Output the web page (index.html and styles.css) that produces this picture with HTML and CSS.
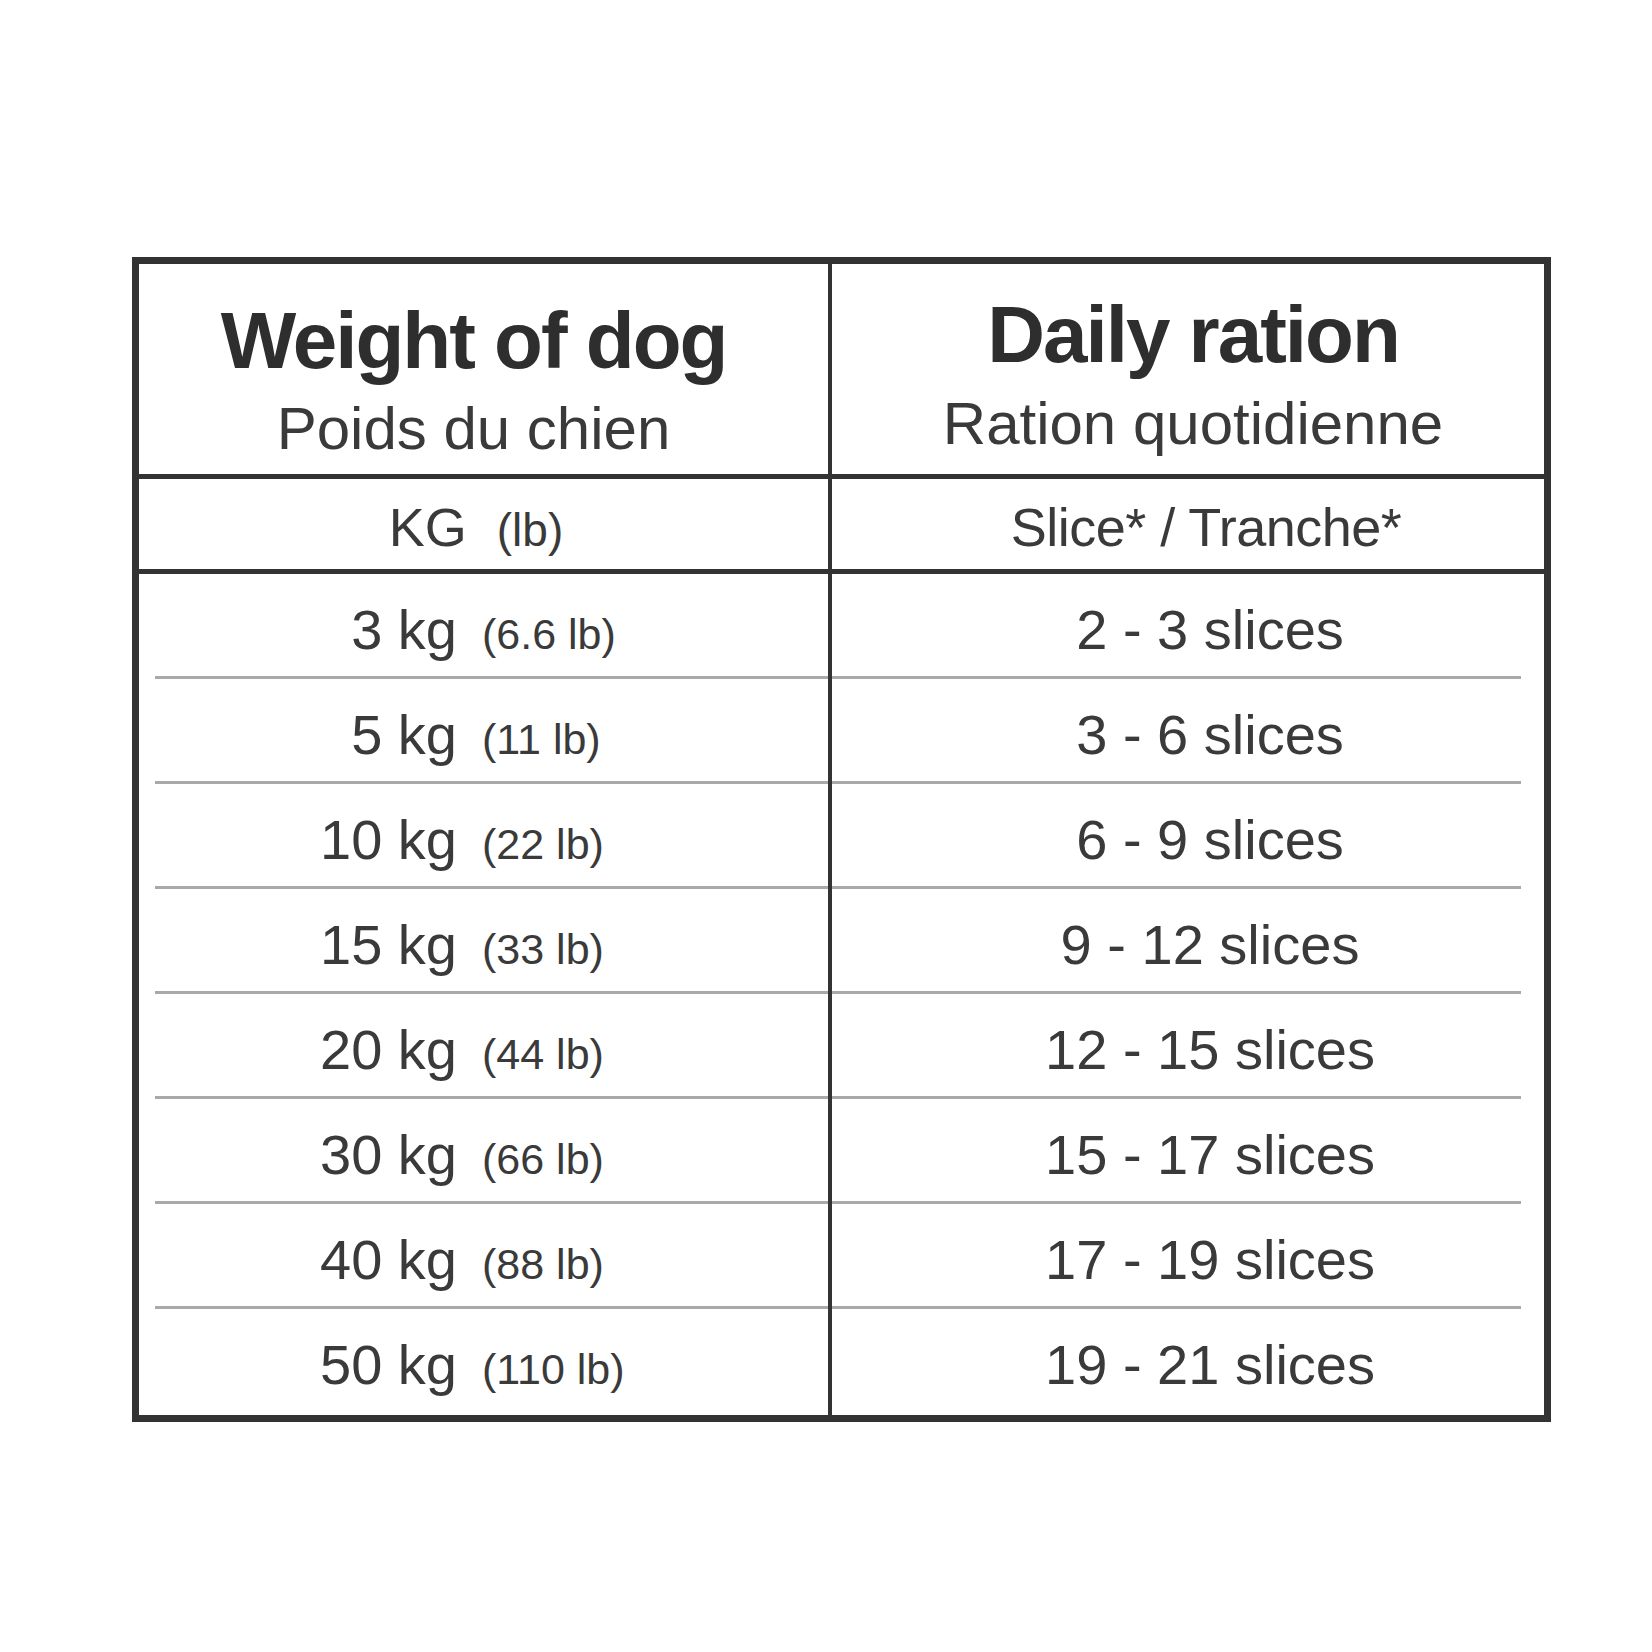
FILE: index.html
```html
<!DOCTYPE html>
<html lang="en">
<head>
<meta charset="utf-8">
<title>Feeding guide</title>
<link rel="stylesheet" href="styles.css">
</head>
<body>
<div class="chart">
  <div class="row head1">
    <div class="cell left">
      <div class="title">Weight of dog</div>
      <div class="sub">Poids du chien</div>
    </div>
    <div class="cell right">
      <div class="title">Daily ration</div>
      <div class="sub">Ration quotidienne</div>
    </div>
  </div>
  <div class="row head2">
    <div class="cell left">KG<span class="unit">(lb)</span></div>
    <div class="cell right">Slice* / Tranche*</div>
  </div>

  <div class="row data"><div class="cell weight"><span class="kg">3 kg</span><span class="lb">(6.6 lb)</span></div><div class="cell ration">2 - 3 slices</div></div>
  <div class="sep"></div>
  <div class="row data"><div class="cell weight"><span class="kg">5 kg</span><span class="lb">(11 lb)</span></div><div class="cell ration">3 - 6 slices</div></div>
  <div class="sep"></div>
  <div class="row data"><div class="cell weight"><span class="kg">10 kg</span><span class="lb">(22 lb)</span></div><div class="cell ration">6 - 9 slices</div></div>
  <div class="sep"></div>
  <div class="row data"><div class="cell weight"><span class="kg">15 kg</span><span class="lb">(33 lb)</span></div><div class="cell ration">9 - 12 slices</div></div>
  <div class="sep"></div>
  <div class="row data"><div class="cell weight"><span class="kg">20 kg</span><span class="lb">(44 lb)</span></div><div class="cell ration">12 - 15 slices</div></div>
  <div class="sep"></div>
  <div class="row data"><div class="cell weight"><span class="kg">30 kg</span><span class="lb">(66 lb)</span></div><div class="cell ration">15 - 17 slices</div></div>
  <div class="sep"></div>
  <div class="row data"><div class="cell weight"><span class="kg">40 kg</span><span class="lb">(88 lb)</span></div><div class="cell ration">17 - 19 slices</div></div>
  <div class="sep"></div>
  <div class="row data last"><div class="cell weight"><span class="kg">50 kg</span><span class="lb">(110 lb)</span></div><div class="cell ration">19 - 21 slices</div></div>
</div>
</body>
</html>
```

FILE: styles.css
```css
html, body {
  margin: 0;
  padding: 0;
  background: #ffffff;
}

body {
  font-family: "Liberation Sans", Arial, Helvetica, sans-serif;
  color: #333333;
}

.chart {
  position: relative;
  width: 1405px;
  margin: 257px 0 0 132px;
  border: 7px solid #333333;
}

/* central vertical rule, drawn over the rows */
.chart::after {
  content: "";
  position: absolute;
  top: 0;
  bottom: 0;
  left: 689px;
  width: 4px;
  background: #333333;
}

.row {
  display: grid;
  grid-template-columns: 691px 714px;
}

.cell {
  text-align: center;
}

/* header row 1 */
.head1 {
  height: 210px;
  border-bottom: 5px solid #333333;
}

.head1 .title {
  font-size: 80px;
  line-height: 80px;
  font-weight: 700;
  letter-spacing: -2px;
  color: #2e2e2e;
}

.head1 .sub {
  font-size: 60px;
  line-height: 60px;
  color: #3a3a3a;
}

.head1 .left {
  padding: 37px 22px 0 0;
}

.head1 .left .sub {
  margin-top: 18px;
}

.head1 .right {
  padding: 31px 0 0 12px;
}

.head1 .right .sub {
  margin-top: 19px;
}

/* header row 2 */
.head2 {
  height: 90px;
  border-bottom: 5px solid #333333;
  font-size: 54px;
  line-height: 80px;
  color: #3a3a3a;
}

.head2 .cell {
  padding-top: 8px;
}

.head2 .left {
  padding-right: 17px;
}

.head2 .right {
  padding-left: 38px;
  letter-spacing: -0.5px;
}

.head2 .unit {
  font-size: 46px;
  margin-left: 30px;
}

/* data rows */
.data {
  height: 102px;
  font-size: 56px;
  line-height: 88px;
  color: #3a3a3a;
}

.data.last {
  height: 106px;
}

.data .cell {
  padding-top: 12px;
}

.weight {
  display: grid;
  grid-template-columns: 318px 1fr;
  align-items: baseline;
}

.weight .kg {
  text-align: right;
}

.weight .lb {
  text-align: left;
  padding-left: 25px;
  font-size: 43px;
}

.ration {
  padding-left: 46px;
}

.sep {
  height: 3px;
  margin: 0 23px 0 16px;
  background: #a9a9a9;
}
```
